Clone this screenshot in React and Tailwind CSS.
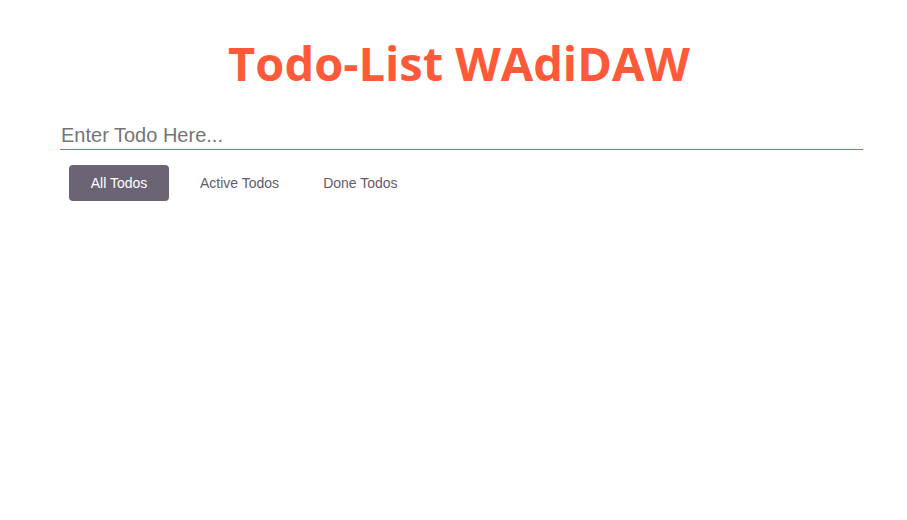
const tabs = ['All Todos', 'Active Todos', 'Done Todos'];

const App = () => {
	return (
		<div className="min-h-[520px] bg-white font-['Liberation_Sans',Arial,sans-serif]">
			<h1 className="pt-[31px] pl-[11px] text-center text-[47px] leading-[64px] font-bold text-[#fe5a3a] font-['Open_Sans','Noto_Sans',sans-serif]">
				Todo-List WAdiDAW
			</h1>
			<div className="mx-[60px] mt-[25px] w-[803px]">
				<input
					type="text"
					placeholder="Enter Todo Here..."
					className="block w-full h-[29px] bg-transparent text-[20px] text-[#555] placeholder:text-[#757575] outline-none pl-px"
				/>
				<div className="h-px w-full bg-[#ea5a36]"></div>
				<div className="flex items-center mt-[15px] ml-[9px]">
					{tabs.map((t, i) => (
						<button
							key={t}
							className={
								i === 0
									? 'h-[36px] w-[100px] rounded-[4px] bg-[#6b6475] text-white text-[14px]'
									: i === 1
										? 'h-[36px] px-[22px] text-[#625c6c] text-[14px] ml-[9px]'
										: 'h-[36px] px-[22px] text-[#625c6c] text-[14px]'
							}
						>
							{t}
						</button>
					))}
				</div>
			</div>
		</div>
	);
};

export default App;
